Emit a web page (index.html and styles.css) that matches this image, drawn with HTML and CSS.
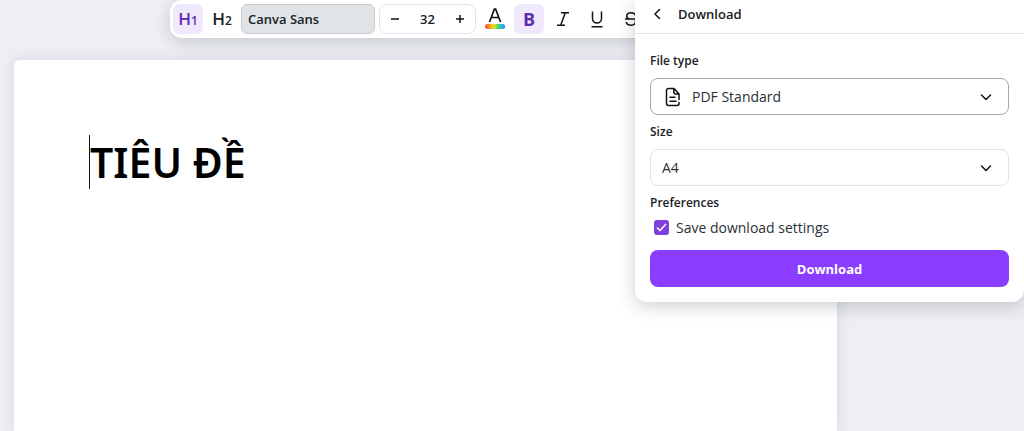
FILE: index.html
```html
<!DOCTYPE html>
<html lang="vi">
<head>
<meta charset="utf-8">
<meta name="viewport" content="width=device-width, initial-scale=1">
<title>Document editor</title>
<link rel="stylesheet" href="styles.css">
</head>
<body>
<div class="editor">
  <header class="toolbar" role="toolbar" aria-label="Text formatting">
    <button class="tool tool-heading tool-active" type="button">H<small>1</small></button>
    <button class="tool tool-heading" type="button">H<small>2</small></button>
    <button class="font-picker" type="button">Canva Sans</button>
    <div class="stepper">
      <button class="step" type="button" aria-label="Decrease size"><svg width="8" height="8" viewBox="0 0 8 8"><path d="M0 4h8"/></svg></button>
      <input class="step-value" type="text" value="32" aria-label="Font size">
      <button class="step" type="button" aria-label="Increase size"><svg width="8" height="8" viewBox="0 0 8 8"><path d="M0 4h8M4 0v8"/></svg></button>
    </div>
    <button class="tool tool-color" type="button" aria-label="Text color">
      <svg width="22" height="22" viewBox="0 0 22 22">
        <defs><linearGradient id="rainbow"><stop offset="0" stop-color="#f0453a"/><stop offset=".25" stop-color="#fb9d1c"/><stop offset=".45" stop-color="#e5e52a"/><stop offset=".65" stop-color="#46d957"/><stop offset=".82" stop-color="#25bfe0"/><stop offset="1" stop-color="#3c6cf0"/></linearGradient></defs>
        <path d="M5.500 14 10.400 1h1.200l4.900 13M7.300 9.500h7.400" fill="none" stroke="#0e1318" stroke-width="1.700"/>
        <rect x="1" y="16" width="20" height="5" rx="2.500" fill="url(#rainbow)"/>
      </svg>
    </button>
    <button class="tool tool-active tool-bold" type="button">B</button>
    <button class="tool" type="button" aria-label="Italic"><svg class="line-icon" width="16" height="18" viewBox="0 0 16 18"><path d="M6 2.800h8M2 15.200h8M10.300 2.800 5.700 15.200"/></svg></button>
    <button class="tool" type="button" aria-label="Underline"><svg class="line-icon" width="16" height="18" viewBox="0 0 16 18"><path d="M3.500 1.500v7a4.500 4.500 0 0 0 9 0v-7M2.500 16.800h11"/></svg></button>
    <button class="tool" type="button" aria-label="Strikethrough"><svg class="line-icon" width="16" height="18" viewBox="0 0 16 18"><path d="M12.500 5.500C12 3.600 10.300 2.700 8 2.700c-2.600 0-4.300 1.200-4.300 3.200 0 1.500 1 2.500 2.800 3.100M2 9h12M12 9.500c.4.500.6 1.100.6 1.800 0 2.300-1.800 3.900-4.500 3.900-2.600 0-4.500-1.100-4.900-3.200"/></svg></button>
  </header>
  <main class="page">
    <h1 class="title" contenteditable="true" spellcheck="false">TIÊU ĐỀ</h1>
  </main>
</div>
<aside class="panel" aria-label="Download">
  <div class="panel-head">
    <button class="back" type="button" aria-label="Back"><svg class="chevron" width="8" height="12" viewBox="0 0 8 12"><path d="M6.500 1.500 2 6l4.500 4.500"/></svg></button>
    <h2 class="panel-title">Download</h2>
  </div>
  <form class="panel-form">
    <label class="label" for="type">File type</label>
    <div class="field field-strong">
      <svg class="file-icon" width="16" height="20" viewBox="0 0 16 20"><path d="M14 12.500V7L9 1.500H3.500a2 2 0 0 0-2 2v13a2 2 0 0 0 2 2H12a2 2 0 0 0 2-2v-1M8.800 1.500V5a2 2 0 0 0 2 2H14M5 10.200h5M5 14.200h6"/></svg>
      <select class="select select-icon" id="type"><option>PDF Standard</option></select>
      <svg class="chevron arrow" width="12" height="8" viewBox="0 0 12 8"><path d="m1.500 2 4.500 4.500L10.500 2"/></svg>
    </div>
    <label class="label" for="size">Size</label>
    <div class="field">
      <select class="select" id="size"><option>A4</option></select>
      <svg class="chevron arrow" width="12" height="8" viewBox="0 0 12 8"><path d="m1.500 2 4.500 4.500L10.500 2"/></svg>
    </div>
    <fieldset class="prefs">
      <legend class="label">Preferences</legend>
      <label class="check">
        <span class="box"><input class="check-input" type="checkbox" checked><svg class="tick" width="11" height="9" viewBox="0 0 11 9"><path d="m1 4.500 3 3L10 1"/></svg></span>
        Save download settings
      </label>
    </fieldset>
    <button class="download" type="button">Download</button>
  </form>
</aside>
</body>
</html>
```
FILE: styles.css
```css
* { box-sizing: border-box; }

body {
  margin: 0;
  background: #eeeef3;
  color: #1b2025;
  font-family: "Open Sans", "Noto Sans", sans-serif;
  font-size: 14px;
  overflow: hidden;
}

button, input, select { font: inherit; color: inherit; }
button { padding: 0; border: 0; background: none; }
svg { display: block; }

.editor {
  display: flex;
  flex-direction: column;
  gap: 22px;
  min-height: 100vh;
}

.toolbar {
  display: flex;
  align-items: center;
  gap: 4px;
  margin-left: 170px;
  padding: 4px 3px;
  border-radius: 12px 0 0 12px;
  background: #fff;
  box-shadow: 0 4px 16px rgba(40, 55, 80, .2);
}

.tool {
  display: grid;
  place-items: center;
  width: 30px;
  height: 30px;
  border-radius: 6px;
}
.tool-active { background: #f0e8fd; color: #612dae; }
.tool-heading {
  display: flex;
  align-items: baseline;
  justify-content: center;
  font-size: 17px;
  font-weight: 600;
  line-height: 30px;
}
.tool-heading small { font-size: 12px; }
.tool-bold { font-size: 18px; font-weight: 700; }

.font-picker {
  width: 134px;
  height: 30px;
  padding: 0 6px;
  border: 1px solid #c9cdd0;
  border-radius: 6px;
  background: #e0e4e6;
  font-size: 13px;
  font-weight: 600;
  text-align: left;
}

.stepper {
  display: flex;
  width: 97px;
  height: 30px;
  border: 1px solid #e3e4e8;
  border-radius: 8px;
}
.step { display: grid; place-items: center; width: 30px; }
.step path { stroke: #0e1318; stroke-width: 1.500; }
.step-value {
  flex: 1;
  min-width: 0;
  padding: 0;
  border: 0;
  background: none;
  font-size: 13px;
  font-weight: 600;
  text-align: center;
}
.line-icon { fill: none; stroke: #0e1318; stroke-width: 1.500; }

.page {
  flex: 1;
  width: calc(100% - 201px);
  margin-left: 14px;
  padding: 75px;
  border-radius: 6px 6px 0 0;
  background: #fff;
  box-shadow: 0 0 14px rgba(50, 90, 100, .14);
}
.title {
  margin: 0;
  border-left: 1px solid #0e1318;
  color: #000;
  font-family: "Noto Sans", "Open Sans", sans-serif;
  font-size: 41px;
  font-weight: 600;
  line-height: 54px;
}

.panel {
  position: absolute;
  top: 0;
  right: 0;
  width: 389px;
  border-radius: 0 0 12px 12px;
  background: #fff;
  box-shadow: 0 4px 18px rgba(40, 55, 70, .24);
}
.panel-head {
  display: flex;
  align-items: center;
  gap: 17px;
  height: 34px;
  padding: 0 18px 6px;
  border-bottom: 1px solid #e8e9ec;
}
.panel-title { margin: 0; font-size: 13px; font-weight: 600; line-height: 20px; }
.panel-form {
  display: flex;
  flex-direction: column;
  padding: 18px 15px 15px;
}
.label {
  padding: 0;
  font-size: 12px;
  font-weight: 600;
  line-height: 18px;
}
.field {
  display: grid;
  align-items: center;
  height: 37px;
  margin: 8px 0;
  border: 1px solid #e0e1e5;
  border-radius: 8px;
}
.field-strong { border-color: #a4a7ab; }
.field > * { grid-area: 1 / 1; }
.select {
  width: 100%;
  height: 35px;
  padding: 0 36px 0 11px;
  border: 0;
  border-radius: 8px;
  background: none;
  appearance: none;
  color: #2b3036;
}
.select-icon { padding-left: 41px; }
.file-icon { margin-left: 14px; }
.arrow { justify-self: end; margin-right: 16px; }
.chevron, .file-icon {
  fill: none;
  stroke: #0e1318;
  stroke-width: 1.500;
  stroke-linecap: round;
  stroke-linejoin: round;
  pointer-events: none;
}

.prefs { margin: 0; padding: 0; border: 0; }
.check {
  display: flex;
  align-items: center;
  gap: 7px;
  height: 30px;
  padding-left: 4px;
  color: #2b3036;
}
.box { display: grid; place-items: center; }
.box > * { grid-area: 1 / 1; }
.check-input {
  width: 15px;
  height: 15px;
  margin: 0;
  border-radius: 3px;
  background: #8040df;
  appearance: none;
}
.tick { fill: none; stroke: #fff; stroke-width: 1.500; pointer-events: none; }
.download {
  height: 37px;
  margin-top: 8px;
  border-radius: 8px;
  background: #8b3dff;
  color: #fff;
  font-size: 13px;
  font-weight: 700;
}
```
